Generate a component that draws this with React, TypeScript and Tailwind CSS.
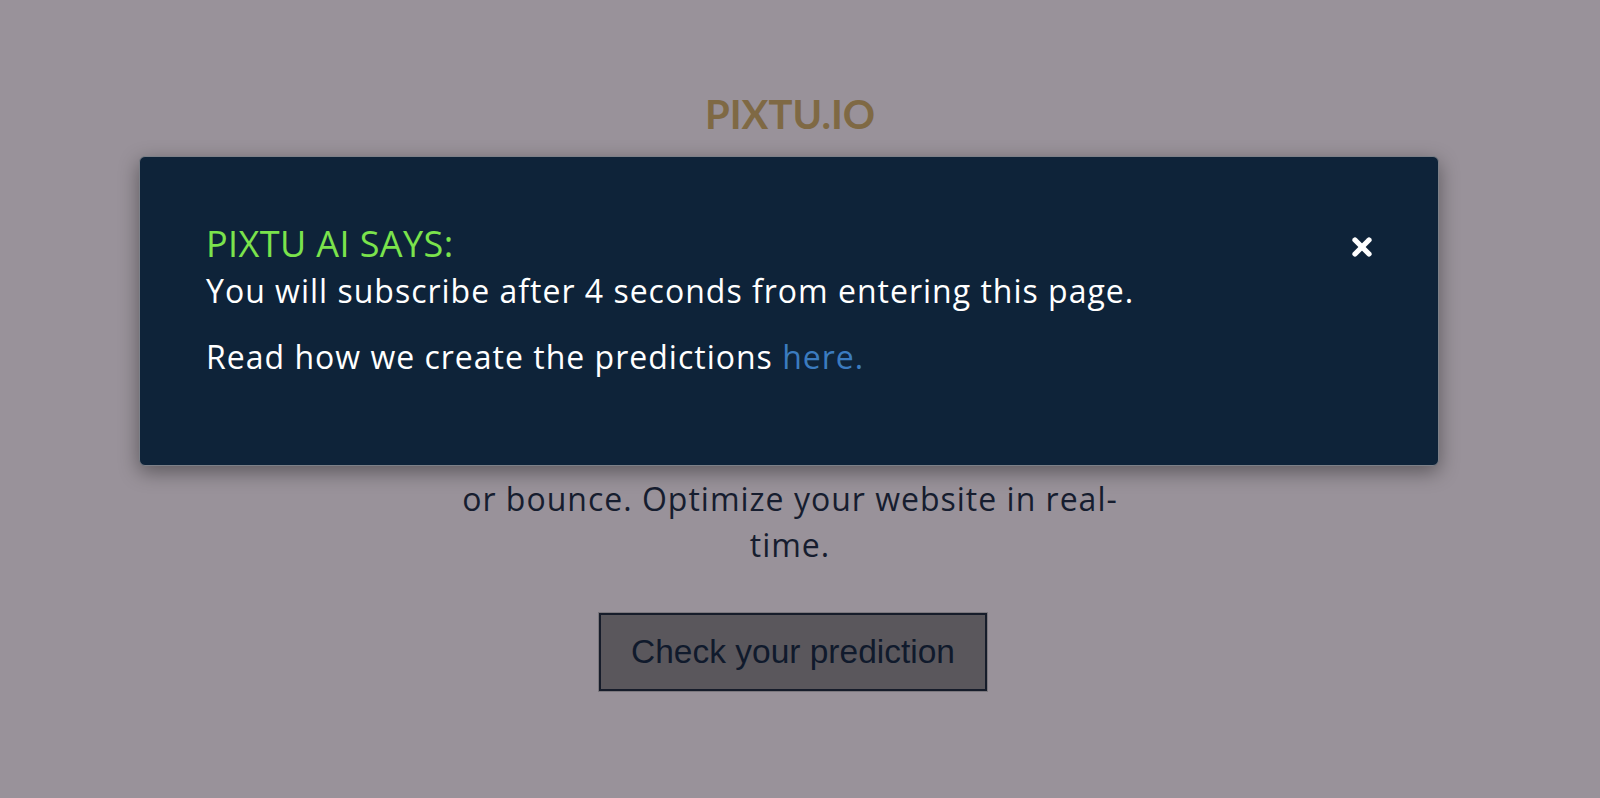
import { X } from 'lucide-react';

export default function App() {
  return (
    <div className="relative h-[798px] w-full overflow-hidden bg-[#99929a] font-['Open_Sans',sans-serif]">
      {/* page behind the overlay */}
      <div className="flex w-[1580px] flex-col items-center pt-[90px]">
        <h1 className="font-['Lato',sans-serif] text-[40px] font-bold leading-[48px] text-[#7f6944]">PIXTU.IO</h1>
        <div className="h-[338px]" />
        <p className="w-[700px] text-center text-[32px] leading-[46px] tracking-[1px] text-[#161d2f]">
          or bounce. Optimize your website in real-time.
        </p>
        <button className="ml-[6px] mt-[45px] h-[78px] w-[388px] border-2 border-[#161c2a] bg-[#5a575c] font-['Liberation_Sans',sans-serif] text-[33.5px] text-[#101a2c] outline outline-1 outline-[#7b777d]">
          Check your prediction
        </button>
      </div>

      {/* prediction modal */}
      <div className="absolute left-[139px] top-[156px] h-[310px] w-[1300px] rounded-[6px] border border-[#7c8088] bg-[#0e2339] shadow-[0_6px_20px_rgba(0,0,0,0.4)]">
        <div className="flex items-start justify-between pl-[66px] pr-[62px] pt-[64px]">
          <div>
            <h2 className="text-[36px] leading-[46px] tracking-[0.4px] text-[#7be34c]">PIXTU AI SAYS:</h2>
            <p className="text-[32px] leading-[48px] tracking-[1px] text-white">You will subscribe after 4 seconds from entering this page.</p>
            <p className="mt-[18px] text-[32px] leading-[48px] tracking-[1px] text-white">
              Read how we create the predictions <a className="text-[#3b7bbf]">here.</a>
            </p>
          </div>
          <button className="mt-[12px] text-white">
            <X size={28} strokeWidth={4.5} />
          </button>
        </div>
      </div>
    </div>
  );
}
